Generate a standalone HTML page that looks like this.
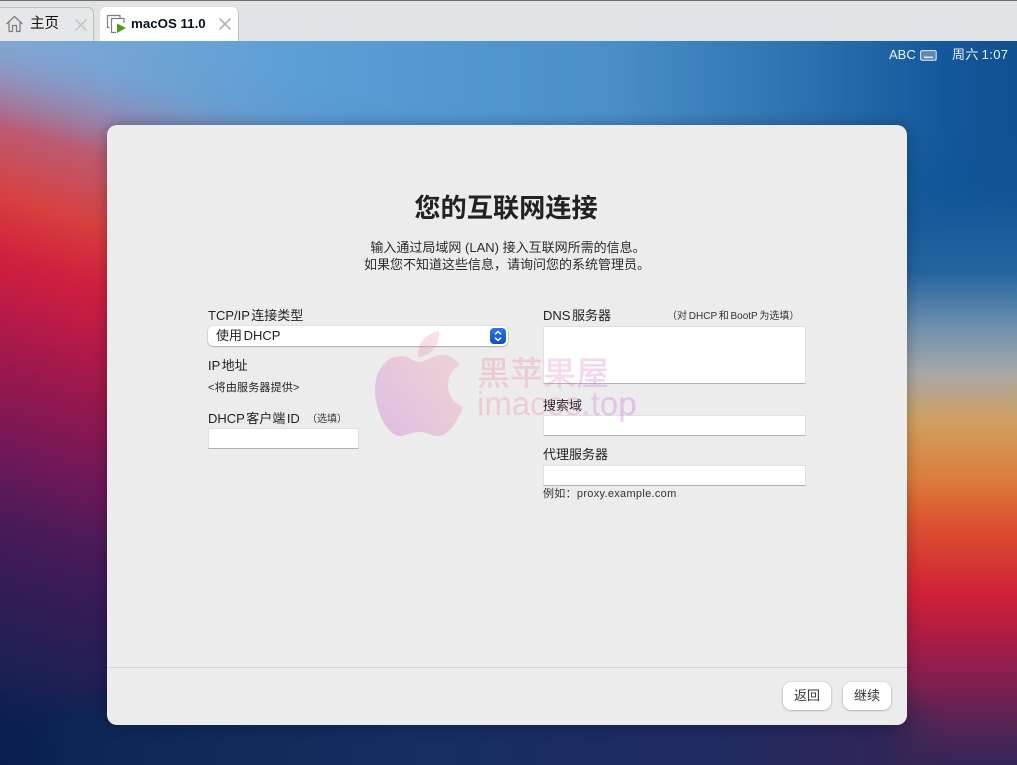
<!DOCTYPE html>
<html lang="zh"><head><meta charset="utf-8"><title>macOS 11.0</title>
<style>
html,body{margin:0;padding:0;width:1017px;height:765px;overflow:hidden;background:#333}
body{position:relative;font-family:"Liberation Sans","Noto Sans CJK SC",sans-serif;color:#262626}
.a{position:absolute;white-space:nowrap;line-height:16px}
.l{font-size:13px;color:#222;word-spacing:-2px}
.s{font-size:10px;color:#333}
.f{position:absolute;background:#fff;box-sizing:border-box;border:1px solid #e0e0e0;border-bottom:1px solid #b2b2b2}
#bg{position:absolute;left:0;top:41px;width:1017px;height:724px}
#bar{position:absolute;left:0;top:0;width:1017px;height:41px;background:#e2e3e5;border-top:1px solid #6e6e6e;box-sizing:border-box}
.tab{position:absolute;top:7px;height:34px;box-sizing:border-box;border-radius:6px 6px 0 0}
#panel{position:absolute;left:107px;top:125px;width:800px;height:600px;background:#ececec;border-radius:10px;box-shadow:0 0 14px rgba(0,0,0,.3)}
.btn{position:absolute;top:682px;width:48px;height:28px;background:#fff;border-radius:8px;box-shadow:0 0.5px 2px rgba(0,0,0,.35);font-size:13px;line-height:28px;text-align:center;color:#333}
</style></head><body>
<svg id="bg" viewBox="0 41 1017 724" preserveAspectRatio="none">
<defs>
<linearGradient id="gl" gradientUnits="userSpaceOnUse" x1="20" y1="40" x2="-180" y2="705">
<stop offset="0" stop-color="#7ba4d4"/><stop offset=".063" stop-color="#9a80a8"/><stop offset=".128" stop-color="#bc5a70"/><stop offset=".223" stop-color="#d8403f"/><stop offset=".306" stop-color="#d0203f"/><stop offset=".383" stop-color="#b81a48"/><stop offset=".479" stop-color="#92184e"/><stop offset=".575" stop-color="#701858"/><stop offset=".67" stop-color="#4a1a58"/><stop offset=".766" stop-color="#321c55"/><stop offset=".862" stop-color="#1e2055"/><stop offset=".959" stop-color="#0a1f50"/><stop offset="1" stop-color="#0a1f50"/>
</linearGradient>
<linearGradient id="gr" gradientUnits="userSpaceOnUse" x1="0" y1="40" x2="0" y2="765">
<stop offset="0" stop-color="#155a9f"/><stop offset=".192" stop-color="#0f5596"/><stop offset=".319" stop-color="#23649f"/><stop offset=".396" stop-color="#6f8fae"/><stop offset=".459" stop-color="#a8a8a8"/><stop offset=".524" stop-color="#d0a060"/><stop offset=".607" stop-color="#dc7c3c"/><stop offset=".67" stop-color="#dc5030"/><stop offset=".766" stop-color="#d02038"/><stop offset=".83" stop-color="#a81c48"/><stop offset=".894" stop-color="#7a2050"/><stop offset=".959" stop-color="#4a2555"/><stop offset="1" stop-color="#342558"/>
</linearGradient>
<linearGradient id="mh" gradientUnits="userSpaceOnUse" x1="107" y1="0" x2="907" y2="0"><stop offset="0" stop-color="#000"/><stop offset="1" stop-color="#fff"/></linearGradient>
<mask id="mr" maskUnits="userSpaceOnUse" x="0" y="0" width="1017" height="765"><rect width="1017" height="765" fill="url(#mh)"/></mask>
<linearGradient id="gt" gradientUnits="userSpaceOnUse" x1="0" y1="0" x2="1017" y2="0">
<stop offset="0" stop-color="#85a8d5"/><stop offset=".3" stop-color="#5a9fd6"/><stop offset=".6" stop-color="#4a8fc8"/><stop offset=".8" stop-color="#2a70ae"/><stop offset=".93" stop-color="#14589c"/><stop offset="1" stop-color="#0f5090"/>
</linearGradient>
<linearGradient id="mtg" gradientUnits="userSpaceOnUse" x1="115" y1="30" x2="85" y2="150"><stop offset="0" stop-color="#fff"/><stop offset="1" stop-color="#000"/></linearGradient>
<mask id="mt" maskUnits="userSpaceOnUse" x="0" y="0" width="1017" height="765"><rect width="1017" height="765" fill="url(#mtg)"/></mask>
<linearGradient id="mvg" gradientUnits="userSpaceOnUse" x1="0" y1="125" x2="0" y2="230"><stop offset="0" stop-color="#fff"/><stop offset="1" stop-color="#000"/></linearGradient>
<mask id="mv" maskUnits="userSpaceOnUse" x="0" y="0" width="1017" height="765"><rect width="1017" height="765" fill="url(#mvg)"/></mask>
<linearGradient id="gb" gradientUnits="userSpaceOnUse" x1="0" y1="0" x2="1017" y2="0">
<stop offset="0" stop-color="#0a1f50" stop-opacity="0"/><stop offset=".07" stop-color="#0c2654"/><stop offset=".4" stop-color="#152e60"/><stop offset=".7" stop-color="#1f2a60"/><stop offset=".87" stop-color="#2e2558"/><stop offset=".93" stop-color="#3a2a50" stop-opacity="0"/>
</linearGradient>
<linearGradient id="mbg" gradientUnits="userSpaceOnUse" x1="0" y1="690" x2="0" y2="725"><stop offset="0" stop-color="#000"/><stop offset="1" stop-color="#fff"/></linearGradient>
<mask id="mb" maskUnits="userSpaceOnUse" x="0" y="0" width="1017" height="765"><rect width="1017" height="765" fill="url(#mbg)"/></mask>
</defs>
<rect x="0" y="41" width="1017" height="724" fill="url(#gl)"/>
<rect x="0" y="41" width="1017" height="724" fill="url(#gr)" mask="url(#mr)"/>
<g mask="url(#mt)"><rect x="0" y="41" width="1017" height="200" fill="url(#gt)" mask="url(#mv)"/></g>
<rect x="0" y="690" width="1017" height="75" fill="url(#gb)" mask="url(#mb)"/>
</svg>

<div id="bar"></div>
<div class="tab" style="left:-4px;width:98px;background:#e6e7e9;border:1px solid #bdbdbd;border-bottom:0"></div>
<div class="tab" style="left:100px;width:139px;background:#fff;border-right:1px solid #c4c4c4"></div>
<svg class="a" style="left:5px;top:14px" width="19" height="19" viewBox="0 0 19 19" fill="none" stroke="#7c7c7c" stroke-width="1.2"><path d="M1.5 10 9.5 2.5 17.5 10"/><path d="M4 8.5V17.5H7.5V11.5H11.5V17.5H15V8.5"/></svg>
<div class="a" style="left:30px;top:16px;font-size:14.5px;color:#111">主页</div>
<svg class="a" style="left:74px;top:18px" width="14" height="14" viewBox="0 0 14 14" stroke="#c6c6c6" stroke-width="1.6"><path d="M1.5 1.5 12.5 12.5M12.5 1.5 1.5 12.5"/></svg>
<svg class="a" style="left:106px;top:14px" width="21" height="20" viewBox="0 0 21 20" fill="none"><path d="M3.5 13.5H1.5V1.5H14V4" stroke="#808080" stroke-width="1.2"/><path d="M10 18.5H5.5V4.5H18V9" stroke="#808080" stroke-width="1.2"/><path d="M11 9.5 20 14 11 19Z" fill="#4f9a14"/></svg>
<div class="a" style="left:131px;top:16px;font-size:13.3px;font-weight:bold;color:#06101f">macOS 11.0</div>
<svg class="a" style="left:218px;top:17px" width="14" height="14" viewBox="0 0 14 14" stroke="#b4b4b4" stroke-width="1.6"><path d="M1.5 1.5 12.5 12.5M12.5 1.5 1.5 12.5"/></svg>

<div class="a" style="left:889px;top:47px;font-size:13px;color:#f2f5fa">ABC</div>
<svg class="a" style="left:920px;top:50px" width="17" height="11" viewBox="0 0 17 11"><rect x=".6" y=".6" width="15.6" height="9.6" rx="1.5" fill="#5f88b5" stroke="#e8eef5" stroke-width="1"/><rect x="4" y="6.5" width="9" height="1.6" fill="#e0e8f0"/></svg>
<div class="a" style="left:952px;top:47px;font-size:13px;color:#f2f5fa;letter-spacing:.35px;word-spacing:-1px">周六 1:07</div>

<div id="panel"></div>
<div class="a" style="left:107px;top:667px;width:800px;height:1px;background:#d6d6d6"></div>

<div class="a" style="left:106px;top:192px;width:800px;text-align:center;font-size:26.2px;line-height:32px;font-weight:bold;color:#222">您的互联网连接</div>
<div class="a" style="left:108px;top:240px;width:800px;text-align:center;font-size:13px;color:#2a2a2a">输入通过局域网 (LAN) 接入互联网所需的信息。</div>
<div class="a" style="left:107px;top:257px;width:800px;text-align:center;font-size:13px;color:#2a2a2a">如果您不知道这些信息&#65292;请询问您的系统管理员。</div>

<div class="a l" style="left:208px;top:308px">TCP/IP 连接类型</div>
<div class="a" style="left:208px;top:326px;width:300px;height:20px;background:#fff;border-radius:5px;box-shadow:0 .5px 1.5px rgba(0,0,0,.45)"></div>
<div class="a l" style="left:216px;top:328px">使用 DHCP</div>
<svg class="a" style="left:490px;top:328px" width="16" height="16" viewBox="0 0 16 16"><defs><linearGradient id="bb" x1="0" y1="0" x2="0" y2="1"><stop offset="0" stop-color="#2f74ea"/><stop offset="1" stop-color="#0d4fc6"/></linearGradient></defs><rect width="16" height="16" rx="4" fill="url(#bb)"/><path d="M5 6.3 8 3.5 11 6.3M5 9.7 8 12.5 11 9.7" fill="none" stroke="#fff" stroke-width="1.5"/></svg>
<div class="a l" style="left:208px;top:358px">IP 地址</div>
<div class="a" style="left:208px;top:380px;font-size:11px;color:#222;letter-spacing:.2px">&lt;将由服务器提供&gt;</div>
<div class="a l" style="left:208px;top:411px">DHCP 客户端 ID</div>
<div class="a s" style="left:307px;top:412px">&#65288;选填&#65289;</div>
<div class="f" style="left:208px;top:428px;width:151px;height:21px"></div>

<div class="a l" style="left:543px;top:308px">DNS 服务器</div>
<div class="a s" style="left:667px;top:309px;word-spacing:-1px">&#65288;对 DHCP 和 BootP 为选填&#65289;</div>
<div class="f" style="left:543px;top:326px;width:263px;height:58px"></div>
<div class="a l" style="left:543px;top:398px">搜索域</div>
<div class="f" style="left:543px;top:415px;width:263px;height:21px"></div>
<div class="a l" style="left:543px;top:447px">代理服务器</div>
<div class="f" style="left:543px;top:465px;width:263px;height:21px"></div>
<div class="a" style="left:543px;top:486px;font-size:11px;color:#333;letter-spacing:.3px">例如&#65306;proxy.example.com</div>

<div class="btn" style="left:783px">返回</div>
<div class="btn" style="left:843px">继续</div>

<svg class="a" style="left:0;top:0;pointer-events:none" width="1017" height="765" viewBox="0 0 1017 765">
<defs>
<linearGradient id="wa" gradientUnits="userSpaceOnUse" x1="375" y1="420" x2="463" y2="350"><stop offset="0" stop-color="#cc7fd6" stop-opacity=".42"/><stop offset="1" stop-color="#f08a92" stop-opacity=".25"/></linearGradient>
<linearGradient id="wt" gradientUnits="userSpaceOnUse" x1="477" y1="0" x2="640" y2="0"><stop offset="0" stop-color="#f07a80" stop-opacity=".28"/><stop offset=".5" stop-color="#e87ac0" stop-opacity=".28"/><stop offset="1" stop-color="#c060e0" stop-opacity=".32"/></linearGradient>
</defs>
<path fill="url(#wa)" d="M419 362C425 362 433 355 443 355C450 355 456 359 460 365C452 370 448 377 448 385C448 396 455 404 463 407C458 420 449 436 438 436C431 436 427 432 419 432C411 432 407 436 400 436C388 436 375 412 375 390C375 369 387 356 401 356C408 356 414 362 419 362Z"/>
<path fill="url(#wa)" d="M418 357C417 343 427 333 439 331C440 345 431 356 418 357Z"/>
<text x="477" y="385" font-size="33" font-weight="500" fill="url(#wt)" font-family="'Noto Sans CJK SC',sans-serif">黑苹果屋</text>
<text x="477" y="415" font-size="33" fill="url(#wt)" font-family="'Liberation Sans',sans-serif">imacos.top</text>
</svg>
</body></html>
